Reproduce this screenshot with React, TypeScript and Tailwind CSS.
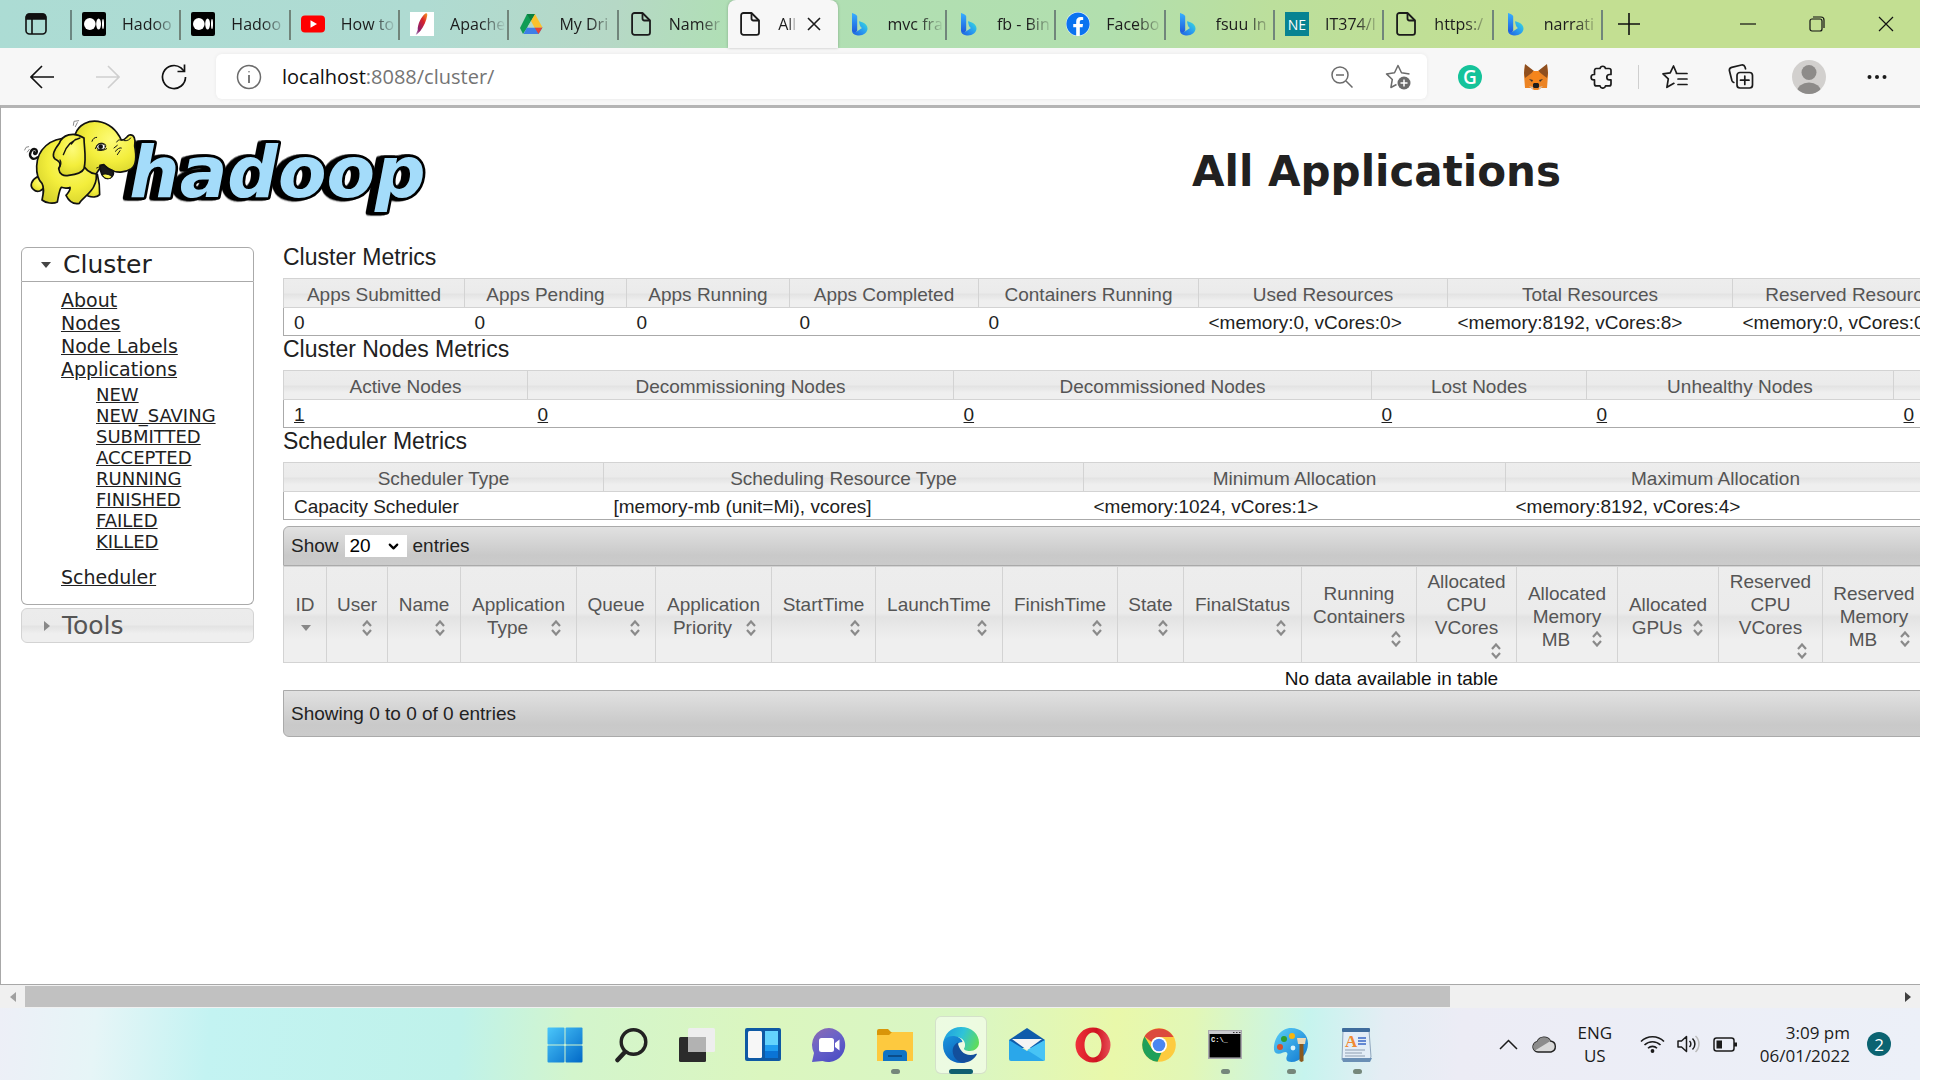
import React from "react";
import { FaFacebook } from "react-icons/fa";
import { ChevronDown } from "lucide-react";

/* ---------- tab icons ---------- */

const PageIcon = () => (
  <svg width="24" height="24" viewBox="0 0 24 24" fill="none" stroke="#1b1b1b" strokeWidth="1.8" strokeLinejoin="round">
    <path d="M5.5 1h8L21 8.5v12a2.4 2.4 0 0 1-2.4 2.4H5.5A2.4 2.4 0 0 1 3.100 20.500V3.400A2.400 2.400 0 0 1 5.500 1z" />
    <path d="M13.500 1v5.600a1.900 1.900 0 0 0 1.900 1.900H21" />
  </svg>
);

const MediumIcon = () => (
  <svg width="24" height="24" viewBox="0 0 24 24">
    <rect width="24" height="24" rx="2" fill="#000" />
    <ellipse cx="7.800" cy="12" rx="5.800" ry="6" fill="#fff" />
    <ellipse cx="16.600" cy="12" rx="2.400" ry="5.600" fill="#fff" />
    <ellipse cx="21" cy="12" rx="1" ry="5" fill="#fff" />
  </svg>
);

const YoutubeIcon = () => (
  <svg width="24" height="24" viewBox="0 0 24 24">
    <rect y="3.500" width="24" height="17" rx="4" fill="#f00" />
    <path d="M9.500 8.200v7.600l6.500-3.800z" fill="#fff" />
  </svg>
);

const FeatherIcon = () => (
  <svg width="24" height="24" viewBox="0 0 24 24">
    <defs>
      <linearGradient id="feather" x1="1" y1="0" x2="0" y2="1">
        <stop offset="0" stopColor="#f59a23" />
        <stop offset=".35" stopColor="#d9242b" />
        <stop offset=".75" stopColor="#8a1f6d" />
        <stop offset="1" stopColor="#b9a3c8" />
      </linearGradient>
    </defs>
    <rect width="24" height="24" fill="#fff" />
    <path d="M15.500 1.500c1.400-.6 2 .3 1.700 2-.8 5-3.400 11-6.700 15.200l-3.500 3.600-1.300.4 2-4.700C7.400 13 11 4.500 15.500 1.500z" fill="url(#feather)" />
  </svg>
);

const DriveIcon = () => (
  <svg width="24" height="24" viewBox="0 0 24 24">
    <path d="M8 2h8l-8 14-4 6-3-6z" fill="#109c55" />
    <path d="M8 15.500h15.500L19.500 22h-15z" fill="#3f7ee8" />
    <path d="M15.500 15.500h8L19.500 22z" fill="#e64335" />
    <path d="M12 9l3.600 6.500H8.200z" fill="#b3d9ca" />
    <path d="M8 2h8l-4 7z" fill="#0b7f40" />
    <path d="M12 9l4-7 7.500 13.500h-8z" fill="#fbc12d" />
  </svg>
);

const BingIcon = () => (
  <svg width="24" height="24" viewBox="0 0 24 24">
    <defs>
      <linearGradient id="bingA" x1="0" y1="0" x2="0" y2="1">
        <stop offset="0" stopColor="#37b0ff" />
        <stop offset="1" stopColor="#1b52d8" />
      </linearGradient>
      <linearGradient id="bingB" x1="0" y1="1" x2="1" y2="0">
        <stop offset="0" stopColor="#1e5ce0" />
        <stop offset=".55" stopColor="#2aa2f0" />
        <stop offset="1" stopColor="#3be0d8" />
      </linearGradient>
    </defs>
    <path d="M4 1c2.500.8 5.200 1.800 5.200 3.800V18.500L6.500 22.500A5 5 0 0 1 4 18.500z" fill="url(#bingA)" />
    <path d="M11 9.200c3 .8 8.500 2.300 8.500 7.300 0 4-4 7-8.500 7-3 0-6-1-7-5 1.200 2.300 3 2.200 5.200.8l4.800-3.300c-2-1-2.600-4-3-6.800z" fill="url(#bingB)" />
  </svg>
);

const FacebookIcon = () => (
  <span className="flex rounded-full bg-white text-2xl text-[#0a73f0]">
    <FaFacebook />
  </span>
);

const NeIcon = () => (
  <span className="flex h-6 w-6 items-center justify-center bg-[#078392] text-[14px] text-white">NE</span>
);

type TabInfo = { title: string; icon: React.ReactNode; active?: boolean; noLine?: boolean };

const tabs: TabInfo[] = [
  { title: "Hadoo", icon: <MediumIcon /> },
  { title: "Hadoo", icon: <MediumIcon /> },
  { title: "How to", icon: <YoutubeIcon /> },
  { title: "Apache", icon: <FeatherIcon /> },
  { title: "My Dri", icon: <DriveIcon /> },
  { title: "Namer", icon: <PageIcon />, noLine: true },
  { title: "All", icon: <PageIcon />, active: true },
  { title: "mvc fra", icon: <BingIcon /> },
  { title: "fb - Bin", icon: <BingIcon /> },
  { title: "Facebo", icon: <FacebookIcon /> },
  { title: "fsuu In", icon: <BingIcon /> },
  { title: "IT374/I", icon: <NeIcon /> },
  { title: "https:/", icon: <PageIcon /> },
  { title: "narrati", icon: <BingIcon /> },
];

const fade = "[mask-image:linear-gradient(to_right,black_55%,transparent)]";

function Tab({ title, icon, active, noLine }: TabInfo) {
  return (
    <div
      className={
        "relative flex h-12 min-w-0 flex-1 items-center pl-[10px] " +
        (active ? "rounded-t-lg bg-[#f7f7f7] shadow-[0_0_3px_rgba(0,0,0,0.25)]" : "")
      }
    >
      <span className="shrink-0">{icon}</span>
      <span
        className={
          "ml-4 overflow-hidden whitespace-nowrap text-[16px] leading-6 text-[#1c1c1c] " +
          fade +
          (active ? " w-[19px]" : " w-[56px]")
        }
      >
        {title}
      </span>
      {active && (
        <button aria-label="Close tab" className="ml-[10px] flex">
          <svg width="14" height="14" viewBox="0 0 14 14" stroke="#1b1b1b" strokeWidth="1.600">
            <path d="M1 1l12 12M13 1L1 13" />
          </svg>
        </button>
      )}
      {!active && !noLine && <span className="absolute right-0 top-[10px] h-[30px] w-[2px] bg-[#71857b]" />}
    </div>
  );
}

function TabStrip() {
  return (
    <div className="flex h-12 bg-[linear-gradient(100deg,#acdcd4_0%,#afdbd2_22%,#b6d8c6_32%,#b0dfb5_38%,#b2dfae_58%,#bcdf9c_66%,#c3df92_80%)]">
      <button aria-label="Tab actions" className="relative flex w-[72px] shrink-0 items-center justify-center">
        <svg width="22" height="22" viewBox="0 0 22 22" fill="none" stroke="#111" strokeWidth="1.600">
          <rect x="1" y="1" width="20" height="20" rx="3.500" />
          <path d="M1.500 3.500a3 3 0 0 1 3-2.500h13a3 3 0 0 1 3 2.500V6h-19z" fill="#111" />
          <path d="M7 6v15" />
        </svg>
        <span className="absolute right-0 top-[10px] h-[30px] w-[2px] bg-[#6c8782]" />
      </button>
      <div className="flex min-w-0 flex-1">
        {tabs.map((t, i) => (
          <Tab key={i} {...t} />
        ))}
      </div>
      <button aria-label="New tab" className="mr-[58px] flex w-[52px] items-center justify-center">
        <svg width="22" height="22" viewBox="0 0 22 22" stroke="#111" strokeWidth="1.600">
          <path d="M11 0v22M0 11h22" />
        </svg>
      </button>
      <button aria-label="Minimize" className="flex w-[69px] items-center justify-center">
        <svg width="16" height="16" viewBox="0 0 16 16" stroke="#111" strokeWidth="1.200">
          <path d="M0 8h16" />
        </svg>
      </button>
      <button aria-label="Restore" className="flex w-[69px] items-center justify-center">
        <svg width="16" height="16" viewBox="0 0 16 16" fill="none" stroke="#111" strokeWidth="1.200">
          <rect x="1" y="3" width="12" height="12" rx="2" />
          <path d="M4 1h8a3 3 0 0 1 3 3v8" />
        </svg>
      </button>
      <button aria-label="Close" className="flex w-[69px] items-center justify-center">
        <svg width="16" height="16" viewBox="0 0 16 16" stroke="#111" strokeWidth="1.200">
          <path d="M1 1l14 14M15 1L1 15" />
        </svg>
      </button>
    </div>
  );
}

/* ---------- address bar ---------- */

const FoxIcon = () => (
  <svg width="26" height="28" viewBox="0 0 26 28">
    <path d="M2 2l8 6h6l8-6 1 10-1 13-6 0-3 2h-4l-3-2H2L1 12z" fill="#ec8424" />
    <path d="M2 1l9 7-5 4-4 3-1-5z" fill="#8f4f1f" />
    <path d="M24 1l-9 7 5 4 4 3 1-5z" fill="#8f4f1f" />
    <path d="M10 8h6l2 8-2 6h-6l-2-6z" fill="#f6851b" />
    <path d="M6 16l4 1-1 2z" fill="#333" />
    <path d="M20 16l-4 1 1 2z" fill="#333" />
    <path d="M10 21l1-1h4l1 1v3l-1 1h-4l-1-1z" fill="#1d1d1d" />
    <path d="M6 23l4 1v3zM20 23l-4 1v3z" fill="#d9bfa5" />
  </svg>
);

function AddressBar() {
  const btn = "flex w-[66px] shrink-0 items-center justify-center";
  return (
    <div className="flex h-[57px] items-center bg-[#f7f7f7] pl-[9px] pr-[10px]">
      <button aria-label="Back" className={btn}>
        <svg width="24" height="24" viewBox="0 0 24 24" fill="none" stroke="#111" strokeWidth="1.600">
          <path d="M24 12H1M12 1L1 12l11 11" />
        </svg>
      </button>
      <button aria-label="Forward" className={btn}>
        <svg width="24" height="24" viewBox="0 0 24 24" fill="none" stroke="#cfcfcf" strokeWidth="1.600">
          <path d="M0 12h23M12 1l11 11-11 11" />
        </svg>
      </button>
      <button aria-label="Refresh" className={btn}>
        <svg width="26" height="26" viewBox="0 0 26 26" fill="none" stroke="#111" strokeWidth="1.700">
          <path d="M24.500 13A11.500 11.500 0 1 1 20 3.900L23 7" />
          <path d="M23.500 0.500V7.500h-7" />
        </svg>
      </button>
      <div className="ml-[9px] flex h-[45px] min-w-0 flex-1 items-center rounded-md bg-white px-5 shadow-[0_0_4px_rgba(0,0,0,0.06)]">
        <svg width="26" height="26" viewBox="0 0 26 26" fill="none" stroke="#6b6b6b" strokeWidth="1.500">
          <circle cx="13" cy="13" r="11.500" />
          <path d="M13 11v8" strokeWidth="1.800" />
          <circle cx="13" cy="7.800" r=".8" fill="#6b6b6b" stroke="none" />
        </svg>
        <div className="ml-5 flex-1 text-[20px] leading-7 text-[#747474]">
          <span className="text-[#111]">localhost</span>:8088/cluster/
        </div>
        <button aria-label="Zoom" className="mr-8">
          <svg width="22" height="22" viewBox="0 0 22 22" fill="none" stroke="#6b6b6b" strokeWidth="1.500">
            <circle cx="9" cy="9" r="8" />
            <path d="M5 9h8M15 15l6.500 6.500" />
          </svg>
        </button>
        <button aria-label="Add to favorites" className="-mr-1">
          <svg width="26" height="26" viewBox="0 0 26 26" fill="none" stroke="#6b6b6b" strokeWidth="1.500" strokeLinejoin="round">
            <path d="M24.500 9.900l-8-1.100L13 1.500 9.500 8.800 1.500 9.900l5.800 5.600-1.400 8 5.600-3" />
            <circle cx="19" cy="19" r="6.500" fill="#6b6b6b" stroke="none" />
            <path d="M19 15.500v7M15.500 19h7" stroke="#fff" />
          </svg>
        </button>
      </div>
      <button aria-label="Grammarly" className={btn + " ml-[10px]"}>
        <span className="flex h-6 w-6 items-center justify-center rounded-full bg-[#15c39a] text-[19px] font-semibold leading-6 text-white">G</span>
      </button>
      <button aria-label="MetaMask" className={btn}>
        <FoxIcon />
      </button>
      <button aria-label="Extensions" className={btn}>
        <svg width="24" height="24" viewBox="0 0 24 24" fill="none" stroke="#1b1b1b" strokeWidth="1.700" strokeLinejoin="round">
          <path d="M6 3.500h4a2.800 2.800 0 0 1 5.500 0H19a2 2 0 0 1 2 2v4h-1.500a2.700 2.700 0 0 0 0 5.400H21v4a2 2 0 0 1-2 2h-3.500a2.800 2.800 0 0 1-5.500 0H6.500a2 2 0 0 1-2-2v-4H3.800a2.700 2.700 0 0 1 0-5.400h.7v-4a2 2 0 0 1 1.500-2z" />
        </svg>
      </button>
      <span className="mx-[3px] h-6 w-px bg-[#cfcfcf]" />
      <button aria-label="Favorites" className={btn}>
        <svg width="26" height="26" viewBox="0 0 26 26" fill="none" stroke="#1b1b1b" strokeWidth="1.700" strokeLinejoin="round" strokeLinecap="round">
          <path d="M14.500 9L11.500 2 8.200 8.800 1 9.800l5.300 5-1.400 8.500 7-4" />
          <path d="M14.500 9.500H25M16 15h9M16 20.500h9" />
        </svg>
      </button>
      <button aria-label="Collections" className={btn}>
        <svg width="26" height="26" viewBox="0 0 26 26" fill="none" stroke="#1b1b1b" strokeWidth="1.700" strokeLinejoin="round" strokeLinecap="round">
          <rect x="9" y="8.500" width="15.500" height="15.500" rx="3" />
          <path d="M16.800 12v8.500M12.500 16.200h8.500M5.800 18.500a3 3 0 0 1-1.900-2L1.500 7a3 3 0 0 1 2.200-3.600L13.500 1a3 3 0 0 1 3.500 2l.5 1.800" />
        </svg>
      </button>
      <button aria-label="Profile" className={btn + " mx-[2px]"}>
        <svg width="34" height="34" viewBox="0 0 34 34">
          <defs>
            <clipPath id="avatar">
              <circle cx="17" cy="17" r="17" />
            </clipPath>
          </defs>
          <g clipPath="url(#avatar)">
            <rect width="34" height="34" fill="#d2d0ce" />
            <circle cx="17" cy="12.500" r="7.500" fill="#8d8b89" />
            <ellipse cx="17" cy="32" rx="12" ry="9.500" fill="#8d8b89" />
          </g>
        </svg>
      </button>
      <button aria-label="Settings" className={btn}>
        <svg width="20" height="6" viewBox="0 0 20 6" fill="#1b1b1b">
          <circle cx="2.500" cy="3" r="2" />
          <circle cx="10" cy="3" r="2" />
          <circle cx="17.500" cy="3" r="2" />
        </svg>
      </button>
    </div>
  );
}

/* ---------- logo ---------- */

function HadoopLogo() {
  return (
    <svg width="410" height="109" viewBox="60 33 1230 327" role="img" aria-label="hadoop" className="shrink-0">
      <defs>
        <radialGradient id="skin" cx=".6" cy=".35" r=".75">
          <stop offset="0" stopColor="#fdfb7a" />
          <stop offset=".55" stopColor="#f3ee3c" />
          <stop offset="1" stopColor="#d3cf2a" />
        </radialGradient>
      </defs>
      <text
        x="388"
        y="273"
        fill="#a4dcfa"
        stroke="#000"
        strokeWidth="16"
        strokeLinejoin="round"
        paintOrder="stroke"
        fontFamily="DejaVu Sans, sans-serif"
        fontWeight="700"
        fontStyle="italic"
        fontSize="212"
        className="[filter:drop-shadow(-9px_1px_0_#000)_drop-shadow(-9px_1px_0_#000)]"
      >
        hadoop
      </text>
      <g stroke="#111" strokeWidth="5" strokeLinejoin="round" strokeLinecap="round" fill="url(#skin)">
        <path d="M112 154C96 166 86 150 92 138C98 124 114 128 110 140C106 147 101 143 103 138" fill="none" strokeWidth="7" />
        <path d="M112 212C94 222 88 240 100 250C112 262 128 254 136 240Z" />
        <path d="M270 240C262 252 258 262 264 270C276 274 292 274 299 266C300 240 296 220 292 205Z" />
        <path d="M205 96C150 96 112 130 110 180C109 205 116 222 126 232C134 246 130 262 126 282C138 292 160 294 172 288C176 268 178 250 184 244C194 248 208 246 210 244C212 254 204 260 198 268C206 284 220 296 238 292C244 280 276 258 282 240C290 226 290 205 288 190L260 100Z" />
        <path d="M226 84C236 54 268 42 294 46C330 52 352 76 364 102C376 104 380 90 388 87C402 84 408 100 404 120C410 152 408 178 394 188C376 200 350 204 326 188C318 182 312 180 306 178L288 204C250 200 226 150 226 84Z" />
        <path d="M300 178C300 204 312 222 330 216C340 210 342 202 338 194C326 190 318 184 312 176Z" fill="#1a1a1a" />
        <path d="M306 206C314 220 328 222 336 212C326 204 316 202 306 206Z" strokeWidth="3" />
        <path d="M252 96C220 74 186 88 178 112C164 130 154 148 164 158C176 164 186 172 176 188C178 204 190 212 206 208C226 206 246 202 252 188C260 156 252 124 252 96Z" />
        <path d="M190 146C196 128 208 104 240 96M214 114L226 100M176 188C184 176 184 168 180 162" fill="none" strokeWidth="4" />
        <path d="M276 106C278 98 284 94 290 94M342 126L352 118M346 136C354 128 358 124 364 126M362 102C356 100 352 104 350 108M372 104C382 106 390 100 392 96M352 146L360 134M290 186C300 182 304 180 308 176" fill="none" strokeWidth="3" />
        <ellipse cx="303" cy="122" rx="13" ry="9" fill="#fff" strokeWidth="3" />
        <circle cx="302" cy="122" r="7" fill="#111" stroke="none" />
        <path d="M286 128C292 110 308 106 318 118M292 132C304 136 314 132 320 128" fill="none" strokeWidth="3" />
        <path d="M220 58L222 46L236 44M226 62L232 50M74 132L78 124L86 122M82 138L88 130" fill="none" stroke="#8a8a8a" strokeWidth="3" />
      </g>
    </svg>
  );
}

/* ---------- sidebar ---------- */

const states = ["NEW", "NEW_SAVING", "SUBMITTED", "ACCEPTED", "RUNNING", "FINISHED", "FAILED", "KILLED"];

function Sidebar() {
  return (
    <nav className="mt-[3px] w-[233px] shrink-0 font-['DejaVu_Sans',Verdana,sans-serif] text-[#212121]">
      <button className="flex h-[35px] w-full items-center rounded-t-md border border-[#aaa] pl-[19px] text-[25px] leading-8">
        <svg width="10" height="6" viewBox="0 0 10 6" className="mr-3">
          <path d="M0 0h10L5 6z" fill="#454545" />
        </svg>
        Cluster
      </button>
      <div className="rounded-b-md border border-t-0 border-[#aaa] pb-[15px] pl-[39px] pt-[7px]">
        <ul className="text-[19px] leading-[23px]">
          {["About", "Nodes", "Node Labels", "Applications"].map((s) => (
            <li key={s}>
              <a href="#" className="underline">{s}</a>
            </li>
          ))}
          <li>
            <ul className="mb-[14px] mt-[3px] pl-[35px] text-[18px] leading-[21px]">
              {states.map((s) => (
                <li key={s}>
                  <a href="#" className="underline">{s}</a>
                </li>
              ))}
            </ul>
          </li>
          <li>
            <a href="#" className="underline">Scheduler</a>
          </li>
        </ul>
      </div>
      <button className="mt-[3px] flex h-[35px] w-full items-center rounded-md border border-[#d3d3d3] bg-[linear-gradient(#ececec_0%,#ebebeb_48%,#e3e3e3_52%,#efefef_75%)] pl-[22px] text-[25px] leading-8 text-[#555]">
        <svg width="6" height="10" viewBox="0 0 6 10" className="mr-3">
          <path d="M0 0v10l6-5z" fill="#888" />
        </svg>
        Tools
      </button>
    </nav>
  );
}

/* ---------- metrics ---------- */

type Col = { head: string; value: string; w: string };

const clusterCols: Col[] = [
  { head: "Apps Submitted", value: "0", w: "w-[181px]" },
  { head: "Apps Pending", value: "0", w: "w-[162px]" },
  { head: "Apps Running", value: "0", w: "w-[163px]" },
  { head: "Apps Completed", value: "0", w: "w-[189px]" },
  { head: "Containers Running", value: "0", w: "w-[220px]" },
  { head: "Used Resources", value: "<memory:0, vCores:0>", w: "w-[249px]" },
  { head: "Total Resources", value: "<memory:8192, vCores:8>", w: "w-[285px]" },
  { head: "Reserved Resources", value: "<memory:0, vCores:0>", w: "w-[243px]" },
];

const nodeCols: Col[] = [
  { head: "Active Nodes", value: "1", w: "w-[244px]" },
  { head: "Decommissioning Nodes", value: "0", w: "w-[426px]" },
  { head: "Decommissioned Nodes", value: "0", w: "w-[418px]" },
  { head: "Lost Nodes", value: "0", w: "w-[215px]" },
  { head: "Unhealthy Nodes", value: "0", w: "w-[307px]" },
  { head: "", value: "0", w: "w-[300px]" },
];

const schedulerCols: Col[] = [
  { head: "Scheduler Type", value: "Capacity Scheduler", w: "w-[320px]" },
  { head: "Scheduling Resource Type", value: "[memory-mb (unit=Mi), vcores]", w: "w-[480px]" },
  { head: "Minimum Allocation", value: "<memory:1024, vCores:1>", w: "w-[422px]" },
  { head: "Maximum Allocation", value: "<memory:8192, vCores:4>", w: "w-[420px]" },
];

const headFill = "bg-[linear-gradient(#ededed_0%,#ebebeb_48%,#e3e3e3_52%,#efefef_75%)]";

function Metrics({ title, cols, links }: { title: string; cols: Col[]; links?: boolean }) {
  return (
    <section>
      <h2 className="pb-2 text-[23px] leading-[26px] text-[#212121]">{title}</h2>
      <table className="w-full table-fixed border-collapse text-[19px] leading-6">
        <thead>
          <tr className={headFill}>
            {cols.map((c) => (
              <th key={c.head} className={"h-[29px] whitespace-nowrap border border-[#d3d3d3] p-0 pt-1 text-center font-normal text-[#555] " + c.w}>
                {c.head}
              </th>
            ))}
            <th className="border border-[#d3d3d3] p-0" />
          </tr>
        </thead>
        <tbody>
          <tr className="border border-t-0 border-[#aaa]">
            {cols.map((c) => (
              <td key={c.head} className="h-7 whitespace-nowrap p-0 pl-[10px] pt-[2px] text-[#212121]">
                {links ? <a href="#" className="underline">{c.value}</a> : c.value}
              </td>
            ))}
            <td />
          </tr>
        </tbody>
      </table>
    </section>
  );
}

/* ---------- applications table ---------- */

type AppCol = { lines: string[]; last?: string; w: string; desc?: boolean };

const appCols: AppCol[] = [
  { lines: ["ID"], w: "w-[43px]", desc: true },
  { lines: ["User"], w: "w-[61px]" },
  { lines: ["Name"], w: "w-[73px]" },
  { lines: ["Application"], last: "Type", w: "w-[116px]" },
  { lines: ["Queue"], w: "w-[79px]" },
  { lines: ["Application"], last: "Priority", w: "w-[116px]" },
  { lines: ["StartTime"], w: "w-[104px]" },
  { lines: ["LaunchTime"], w: "w-[127px]" },
  { lines: ["FinishTime"], w: "w-[115px]" },
  { lines: ["State"], w: "w-[66px]" },
  { lines: ["FinalStatus"], w: "w-[118px]" },
  { lines: ["Running", "Containers"], w: "w-[115px]" },
  { lines: ["Allocated", "CPU", "VCores"], w: "w-[100px]" },
  { lines: ["Allocated", "Memory"], last: "MB", w: "w-[101px]" },
  { lines: ["Allocated"], last: "GPUs", w: "w-[101px]" },
  { lines: ["Reserved", "CPU", "VCores"], w: "w-[104px]" },
  { lines: ["Reserved", "Memory"], last: "MB", w: "w-[103px]" },
];

const SortIcon = ({ desc }: { desc?: boolean }) => (
  <svg width="22" height="16" viewBox="0 0 22 16" className="shrink-0" fill="none" stroke="#8a8a8a" strokeWidth="2.200">
    {desc ? <path d="M6 5h10l-5 6z" fill="#888" stroke="none" /> : <path d="M7 6l4-4.500L15 6M7 10l4 4.500 4-4.500" />}
  </svg>
);

function Applications() {
  const bar = "flex items-center border border-[#aaa] bg-[linear-gradient(#e1e1e1,#c9c9c9_75%,#cbcbcb)] pl-[7px] text-[19px] leading-6 text-[#222]";
  return (
    <section className="mt-[6px]">
      <div className={bar + " h-10 rounded-t-md"}>
        <label className="flex items-center gap-[6px]">
          Show
          <span className="relative flex">
            <select defaultValue="20" className="h-[22px] w-[62px] appearance-none bg-white pl-[5px] text-[19px] leading-[22px] text-black">
              <option>20</option>
              <option>40</option>
            </select>
            <ChevronDown size={15} strokeWidth={3.5} className="pointer-events-none absolute right-[6px] top-1 text-black" />
          </span>
          entries
        </label>
      </div>
      <table className="w-full table-fixed border-collapse text-[19px] leading-[23px]">
        <thead>
          <tr className={headFill}>
            {appCols.map((c, i) => (
              <th key={i} className={"h-24 border border-[#d3d3d3] p-0 pt-[3px] align-middle font-normal text-[#555] " + c.w}>
                {c.lines.map((l) => (
                  <span key={l} className="block whitespace-nowrap text-center">{l}</span>
                ))}
                <span className="flex h-[23px] items-center px-[9px]">
                  <span className="flex-1 text-center">{c.last}</span>
                  <SortIcon desc={c.desc} />
                </span>
              </th>
            ))}
            <th className="border border-[#d3d3d3]" />
          </tr>
        </thead>
        <tbody>
          <tr>
            <td colSpan={18} className="h-[27px] p-0 pt-1 text-center text-[#111]">No data available in table</td>
          </tr>
        </tbody>
      </table>
      <div className={bar + " h-[47px] rounded-b-md"}>Showing 0 to 0 of 0 entries</div>
    </section>
  );
}

/* ---------- taskbar ---------- */

const taskIcons: { name: string; icon: React.ReactNode; open?: boolean; active?: boolean }[] = [
  {
    name: "Start",
    icon: (
      <svg width="36" height="36" viewBox="0 0 36 36">
        <defs>
          <linearGradient id="win" gradientUnits="userSpaceOnUse" x1="0" y1="0" x2="36" y2="36">
            <stop offset="0" stopColor="#4cc8fb" />
            <stop offset="1" stopColor="#0067c6" />
          </linearGradient>
        </defs>
        <g fill="url(#win)">
          <rect x=".5" y=".5" width="17" height="17" rx="1" />
          <rect x="18.500" y=".5" width="17" height="17" rx="1" />
          <rect x=".5" y="18.500" width="17" height="17" rx="1" />
          <rect x="18.500" y="18.500" width="17" height="17" rx="1" />
        </g>
      </svg>
    ),
  },
  {
    name: "Search",
    icon: (
      <svg width="34" height="36" viewBox="0 0 34 36" fill="none" stroke="#222" strokeLinecap="round">
        <circle cx="19.500" cy="15" r="12.300" strokeWidth="3.400" />
        <path d="M10.500 25.500L3.500 33" strokeWidth="4.500" />
      </svg>
    ),
  },
  {
    name: "Task view",
    icon: (
      <svg width="36" height="36" viewBox="0 0 36 36">
        <rect x="0" y="10" width="27" height="25" rx="1.500" fill="#2b2b2b" />
        <rect x="9" y="1" width="27" height="24" rx="1.500" fill="#eeeeee" />
        <rect x="9" y="10" width="18" height="15" fill="#b2b2b2" />
      </svg>
    ),
  },
  {
    name: "Widgets",
    icon: (
      <svg width="36" height="34" viewBox="0 0 36 34">
        <rect width="36" height="33" rx="2" fill="#0e59a4" />
        <rect x="3" y="3" width="14" height="27" rx="1.500" fill="#f7f7f7" />
        <rect x="20" y="3" width="13" height="14" fill="#63d3fd" />
        <rect x="20" y="17" width="13" height="6" fill="#1e9cf0" />
        <rect x="20" y="23" width="13" height="7" fill="#0a74d6" />
      </svg>
    ),
  },
  {
    name: "Chat",
    icon: (
      <svg width="36" height="36" viewBox="0 0 36 36">
        <defs>
          <linearGradient id="chat" x1="0" y1="0" x2=".6" y2="1">
            <stop offset="0" stopColor="#8f6bb0" />
            <stop offset=".5" stopColor="#6a63c8" />
            <stop offset="1" stopColor="#4f4fc4" />
          </linearGradient>
        </defs>
        <path d="M18 1a17 17 0 1 1-6.500 33L1 35l2-9A17 17 0 0 1 18 1z" fill="url(#chat)" />
        <rect x="8" y="11" width="15" height="14" rx="2.500" fill="#fff" />
        <path d="M24 16l4.500-3.500v11L24 20z" fill="#fff" />
      </svg>
    ),
  },
  {
    name: "File Explorer",
    open: true,
    icon: (
      <svg width="36" height="34" viewBox="0 0 36 34">
        <path d="M0 3a2 2 0 0 1 2-2h9l3 3h20a2 2 0 0 1 2 2v10H0z" fill="#d99508" />
        <path d="M0 7h12l3-3h21v29H0z" fill="#fdc93f" />
        <path d="M6 33V26a4 4 0 0 1 4-4h16a4 4 0 0 1 4 4v7z" fill="#1273c4" />
        <path d="M11 28h14" stroke="#0b4d8a" strokeWidth="2" />
      </svg>
    ),
  },
  {
    name: "Microsoft Edge",
    open: true,
    active: true,
    icon: (
      <svg width="36" height="36" viewBox="0 0 36 36">
        <defs>
          <linearGradient id="edgeTop" x1="0" y1=".3" x2="1" y2=".6">
            <stop offset="0" stopColor="#1f9fe0" />
            <stop offset=".5" stopColor="#2fc3d8" />
            <stop offset="1" stopColor="#5fdc5a" />
          </linearGradient>
          <linearGradient id="edgeLeft" x1="0" y1="0" x2=".6" y2="1">
            <stop offset="0" stopColor="#1b96dd" />
            <stop offset="1" stopColor="#0b63bd" />
          </linearGradient>
        </defs>
        <path d="M0 17C1 7 8 0 18 0c11 0 18 7.500 18 15.500 0 5.500-4.500 8.500-9 8.500-4 0-6.500-1.500-6-2.500 2-2.500 1.500-8-3.500-10.500C11 8 3 10 0 17z" fill="url(#edgeTop)" />
        <path d="M0 18C0 11 6 8.500 11 9c5 .4 8 3.500 8.500 6-4 0-7 3-7 8 0 7 5 12 10 12.400-2 .6-4 .6-4.500.6C7 36 0 28 0 18z" fill="url(#edgeLeft)" />
        <path d="M15 15.500c-4.500 2-6 6.500-5 11 1.300 5.500 6 9.500 11.500 9.200 5.500-.6 10-4 12.300-8.200.4-.8-.2-1-.8-.7-5 2.300-11 1.200-14-2.300-2.500-3-4-6-4-9z" fill="#134f9c" />
      </svg>
    ),
  },
  {
    name: "Mail",
    icon: (
      <svg width="36" height="34" viewBox="0 0 36 34">
        <path d="M0 12L18 0l18 12v8H0z" fill="#0f5cab" />
        <path d="M0 12l18 11L36 12v19a2 2 0 0 1-2 2H2a2 2 0 0 1-2-2z" fill="#2aa7ea" />
        <path d="M18 22L36 12v19a2 2 0 0 1-1 1.700z" fill="#47c4f5" />
        <path d="M3 11h30L18 22z" fill="#f4f4f4" />
      </svg>
    ),
  },
  {
    name: "Opera",
    icon: (
      <svg width="36" height="36" viewBox="0 0 36 36">
        <defs>
          <linearGradient id="opera" x1="0" y1="0" x2="1" y2="0">
            <stop offset="0" stopColor="#f0313b" />
            <stop offset=".6" stopColor="#cf1420" />
            <stop offset="1" stopColor="#e85058" />
          </linearGradient>
        </defs>
        <path fillRule="evenodd" fill="url(#opera)" d="M18 .5a17.500 17.500 0 1 1 0 35 17.500 17.500 0 0 1 0-35zm0 5c-5 0-8.500 5.600-8.500 12.500S13 30.500 18 30.500 26.500 25 26.500 18 23 5.500 18 5.500z" />
      </svg>
    ),
  },
  {
    name: "Google Chrome",
    icon: (
      <svg width="34" height="34" viewBox="0 0 34 34">
        <circle cx="17" cy="17" r="16.800" fill="#fdcb3f" />
        <path d="M2.500 8.500A16.800 16.800 0 0 1 31.500 9H17a8 8 0 0 0-7.500 5z" fill="#dc4a3d" />
        <path d="M2.500 8.500L10 21a8 8 0 0 0 9.500 3.500L15.500 33.700A16.800 16.800 0 0 1 2.500 8.500z" fill="#1fa05a" />
        <circle cx="17" cy="17" r="8" fill="#fff" />
        <circle cx="17" cy="17" r="6.300" fill="#4a86f0" />
      </svg>
    ),
  },
  {
    name: "Command Prompt",
    open: true,
    icon: (
      <svg width="34" height="30" viewBox="0 0 34 30">
        <rect x=".8" y=".8" width="32.400" height="27.400" fill="#000" stroke="#a9a9ad" strokeWidth="1.600" />
        <rect x="1" y="1" width="32" height="3" fill="#c9c9ce" />
        <path d="M25 2.500h1.500M28 2.500h1.500M31 2.500h1.500" stroke="#333" />
        <text x="3" y="12" fontSize="7" fontWeight="700" fontFamily="Liberation Mono, monospace" fill="#eee">C:\_</text>
      </svg>
    ),
  },
  {
    name: "Paint",
    open: true,
    icon: (
      <svg width="36" height="36" viewBox="0 0 36 36">
        <defs>
          <linearGradient id="palette" x1="0" y1="0" x2="1" y2="1">
            <stop offset="0" stopColor="#5cd0f8" />
            <stop offset="1" stopColor="#0f77d0" />
          </linearGradient>
        </defs>
        <path d="M18 1c10 0 17 6.500 17 15.500C35 27 27 35 18.500 35c-5 0-6-3-4.500-6 1.500-3.500-1-5-4-3.500-4 2-8.500 2-9-3C.5 11 8 1 18 1z" fill="url(#palette)" />
        <circle cx="7" cy="20" r="3" fill="#d8502a" />
        <circle cx="11" cy="12" r="3" fill="#2f9e2f" />
        <circle cx="19" cy="9" r="3" fill="#f7b60d" />
        <circle cx="20" cy="21" r="2.400" fill="#d8f4fb" />
        <path d="M24 11h9l-1 6h-7z" fill="#ecd9b6" />
        <path d="M26.500 17h4v17l-2 1-2-1z" fill="#8a5a1f" />
      </svg>
    ),
  },
  {
    name: "WordPad",
    open: true,
    icon: (
      <svg width="32" height="36" viewBox="0 0 32 36">
        <path d="M2 3h26l2 27-2 3H1z" fill="#e3edf7" stroke="#8fa6bd" />
        <rect x="1" y="1" width="28" height="4" rx="1" fill="#3f6c9c" />
        <path d="M1 31h30l-2 4H2z" fill="#6a8fb5" />
        <text x="4" y="20" fontSize="17" fontWeight="700" fontFamily="Liberation Serif, serif" fill="#f08a33">A</text>
        <path d="M17 11h8M17 14h8M17 17h8" stroke="#3a67c8" strokeWidth="1.300" />
        <path d="M4 23h20M4 26h17M4 29h20" stroke="#8d9db0" />
      </svg>
    ),
  },
];

function Taskbar() {
  return (
    <footer className="grid h-[72px] grid-cols-[1fr_auto_1fr] items-center bg-[linear-gradient(95deg,#edeff7_0%,#e6f5f7_5%,#c3f3f2_11%,#bff2ea_24%,#d3f5cc_30%,#dbf6bf_40%,#d9f6c4_50%,#e9f8aa_58%,#e2f7b6_62%,#c6f4ee_68%,#e4edf4_72%,#ececf5_76%,#ecf0f8_100%)]">
      <div />
      <div className="flex pl-[2px]">
        {taskIcons.map((t) => (
          <button key={t.name} aria-label={t.name} className="relative flex h-[72px] w-[66px] items-center justify-center pt-px">
            {t.active && <span className="absolute inset-x-[7px] bottom-[6px] top-2 rounded-md border border-black/10 bg-white/50" />}
            <span className="relative">{t.icon}</span>
            {t.open && (
              <span className={"absolute bottom-[6px] h-[5px] rounded-full " + (t.active ? "w-6 bg-[#0f5f70]" : "w-[9px] bg-[#75877b]")} />
            )}
          </button>
        ))}
      </div>
      <div className="flex items-center justify-end pr-[29px] text-[17px] leading-[23px] text-[#1b1b1b]">
        <button aria-label="Show hidden icons">
          <svg width="19" height="11" viewBox="0 0 19 11" fill="none" stroke="#1b1b1b" strokeWidth="1.500">
            <path d="M1 10l8.500-8.500L18 10" />
          </svg>
        </button>
        <svg width="25" height="17" viewBox="0 0 25 17" className="ml-[14px]">
          <path d="M6 16a5.200 5.200 0 0 1-.8-10.300A7.500 7.500 0 0 1 18.500 5 5.600 5.600 0 0 1 19 16z" fill="#d8d8d8" stroke="#222" strokeWidth="1.400" />
          <path d="M5.200 5.700A7.500 7.500 0 0 1 18.500 5L3 14.500A5 5 0 0 1 5.200 5.700z" fill="#8c8c8c" />
        </svg>
        <div className="ml-5 w-[36px] text-center">ENG US</div>
        <svg width="25" height="18" viewBox="0 0 25 18" fill="none" stroke="#1b1b1b" strokeWidth="1.600" className="ml-[27px]">
          <path d="M1 6.500a16.300 16.300 0 0 1 23 0M4.500 10a11.300 11.300 0 0 1 16 0M8 13.200a6.400 6.400 0 0 1 9 0" />
          <circle cx="12.500" cy="16" r="1.900" fill="#1b1b1b" stroke="none" />
        </svg>
        <svg width="24" height="20" viewBox="0 0 24 20" fill="none" stroke="#1b1b1b" strokeWidth="1.500" strokeLinejoin="round" className="ml-3">
          <path d="M1 7v6h3.500l5 4.500V2.500L4.500 7zM12.500 7a4 4 0 0 1 0 6M15.500 4.500a7.500 7.500 0 0 1 0 11" />
          <path d="M18.500 2a11 11 0 0 1 0 16" stroke="#bbb" />
        </svg>
        <svg width="25" height="15" viewBox="0 0 25 15" fill="none" stroke="#1b1b1b" strokeWidth="1.500" className="ml-3">
          <rect x="1" y="1" width="20" height="13" rx="2.500" />
          <rect x="3.500" y="3.500" width="5.500" height="8" fill="#1b1b1b" stroke="none" />
          <path d="M22.500 5.500v4" strokeWidth="3" />
        </svg>
        <div className="ml-[22px] text-right">
          <div>3:09 pm</div>
          <div>06/01/2022</div>
        </div>
        <span className="ml-[17px] flex h-6 w-6 items-center justify-center rounded-full bg-[#0b6371] text-[17px] text-white">2</span>
      </div>
    </footer>
  );
}

function ScrollBar() {
  return (
    <div className="flex h-6 items-center border-t border-[#a8a8a8] bg-[#f0f0f0]">
      <button aria-label="Scroll left" className="flex w-[25px] justify-center">
        <svg width="6" height="10" viewBox="0 0 6 10">
          <path d="M6 0v10L0 5z" fill="#a0a0a0" />
        </svg>
      </button>
      <div className="flex-1">
        <div className="h-[21px] w-[76.2%] bg-[#c1c1c1]" />
      </div>
      <button aria-label="Scroll right" className="flex w-[25px] justify-center">
        <svg width="6" height="10" viewBox="0 0 6 10">
          <path d="M0 0v10l6-5z" fill="#404040" />
        </svg>
      </button>
    </div>
  );
}

export default function App() {
  return (
    <div className="min-h-screen bg-white pr-7">
      <div className="flex min-h-screen flex-col overflow-hidden font-['Open_Sans','Noto_Sans',sans-serif]">
        <TabStrip />
        <AddressBar />
        <div className="flex flex-1 flex-col overflow-hidden border-l border-t-3 border-l-[#a8a8a8] border-t-[#b4b4b4] bg-white">
          <div className="w-[2520px]">
            <header className="flex h-[136px] items-center pb-[9px] pl-[19px] pr-[198px]">
              <HadoopLogo />
              <h1 className="flex-1 text-center font-['DejaVu_Sans',Verdana,sans-serif] text-[42px] font-bold leading-[50px] text-[#212121]">
                All Applications
              </h1>
            </header>
            <div className="flex gap-[29px] pl-5">
              <Sidebar />
              <main className="min-w-0 flex-1 pr-[21px] font-['Liberation_Sans',Arial,sans-serif]">
                <Metrics title="Cluster Metrics" cols={clusterCols} />
                <Metrics title="Cluster Nodes Metrics" cols={nodeCols} links />
                <Metrics title="Scheduler Metrics" cols={schedulerCols} />
                <Applications />
              </main>
            </div>
          </div>
        </div>
        <ScrollBar />
        <Taskbar />
      </div>
    </div>
  );
}
